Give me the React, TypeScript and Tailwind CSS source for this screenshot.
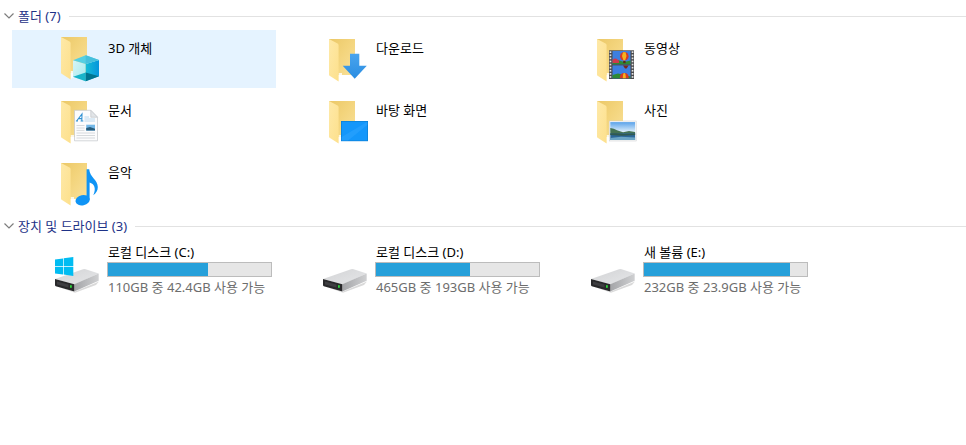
import { useState, type ReactNode } from "react";

const ICON_CLASS = "h-12 w-13 shrink-0";
const ICON_BOX = "-4 0 52 48";

function FolderShape({ raised = false }: { raised?: boolean }) {
  return (
    <g transform={raised ? "translate(0 -2)" : undefined}>
      <path d="M5 4H31V40H5Z" fill="url(#folder-back)" />
      <path d="M14.6 38H18V44L14.6 46Z" fill="#ffffff" opacity="0.8" />
      <path d="M5 4L13.6 8.6Q14.6 9.3 14.6 10.6V46.4L5.6 40.8Q5 40.4 5 39.6Z" fill="url(#folder-front)" />
    </g>
  );
}

function GradientDefs() {
  return (
    <svg className="absolute size-0" aria-hidden="true">
      <defs>
        <linearGradient id="folder-back" x1="0" y1="0" x2="1" y2="1">
          <stop offset="0" stopColor="#ebc867" />
          <stop offset="0.45" stopColor="#f3d47c" />
          <stop offset="1" stopColor="#f9e19a" />
        </linearGradient>
        <linearGradient id="folder-front" x1="0" y1="0" x2="1" y2="1">
          <stop offset="0" stopColor="#fee9a8" />
          <stop offset="1" stopColor="#fde08c" />
        </linearGradient>
        <linearGradient id="cube-left" x1="0" y1="0" x2="1" y2="1">
          <stop offset="0" stopColor="#d6f5f6" />
          <stop offset="1" stopColor="#a4e9ee" />
        </linearGradient>
        <linearGradient id="cube-right" x1="0" y1="0" x2="1" y2="0">
          <stop offset="0" stopColor="#17bdd6" />
          <stop offset="1" stopColor="#0594dc" />
        </linearGradient>
        <linearGradient id="sky" x1="0" y1="0" x2="0" y2="1">
          <stop offset="0" stopColor="#5aa2ea" />
          <stop offset="1" stopColor="#e6f3fb" />
        </linearGradient>
        <linearGradient id="drive-top" x1="0" y1="0" x2="1" y2="1">
          <stop offset="0" stopColor="#d2d3d5" />
          <stop offset="1" stopColor="#e6e7e9" />
        </linearGradient>
        <linearGradient id="drive-side" x1="0" y1="0" x2="1" y2="0">
          <stop offset="0" stopColor="#a4a5a8" />
          <stop offset="1" stopColor="#cfd0d2" />
        </linearGradient>
        <linearGradient id="arrow" x1="0" y1="0" x2="0" y2="1">
          <stop offset="0" stopColor="#49a4ee" />
          <stop offset="1" stopColor="#2a8de2" />
        </linearGradient>
      </defs>
    </svg>
  );
}

function FolderIcon({ children, raised }: { children: ReactNode; raised?: boolean }) {
  return (
    <svg className={ICON_CLASS} viewBox={ICON_BOX} aria-hidden="true">
      <FolderShape raised={raised} />
      {children}
    </svg>
  );
}

function Objects3DIcon() {
  return (
    <FolderIcon raised>
      <path d="M17 25.3L29.7 29V46.2L17 41.7Z" fill="url(#cube-left)" />
      <path d="M29.7 29L43 25V41.3L29.7 46.2Z" fill="url(#cube-right)" />
      <path d="M17 25.3L29.7 20.3L43 25L29.7 29Z" fill="#55cfe2" />
      <path d="M29.7 20.3L43 25L29.7 29Z" fill="#46bfdc" />
      <path d="M17 41.7L29.7 37.6V46.2Z" fill="#19b4c9" />
      <path d="M43 41.3L29.7 37.6V46.2Z" fill="#00748f" />
    </FolderIcon>
  );
}

function DownloadsIcon() {
  return (
    <FolderIcon>
      <path d="M26 18.7H35.3V30.7H42.8L30.7 43.8L18.7 30.7H26Z" fill="url(#arrow)" />
    </FolderIcon>
  );
}

const SPROCKETS = [16.3, 19.4, 22.5, 25.6, 28.7, 31.8, 34.9, 38, 41.1];

function VideosIcon() {
  return (
    <FolderIcon>
      <rect x="17" y="15.3" width="25" height="28.7" fill="#4a4a4c" />
      {SPROCKETS.map((y) => (
        <g key={y} fill="#e3e3e3">
          <rect x="17.6" y={y} width="1.7" height="1.7" />
          <rect x="39.7" y={y} width="1.7" height="1.7" />
        </g>
      ))}
      <rect x="20.5" y="16" width="18" height="13.2" fill="#3d7fe0" />
      <path d="M20.5 26L26 25L32 27L38.5 25.5V29.2H20.5Z" fill="#2e8a35" />
      <path d="M20.5 25Q23 22.5 25.5 24.5Q27.5 25 27 28H20.5Z" fill="#cf3b4c" />
      <circle cx="32.3" cy="21.3" r="4.3" fill="#d63a25" />
      <path d="M31 17.2H33.6L34.5 21L33.2 25.2H31.4L30 21Z" fill="#f5b41d" />
      <rect x="31.2" y="26" width="2.4" height="2.2" fill="#5a2a12" />
      <rect x="20.5" y="30.4" width="18" height="12.9" fill="#3d7fe0" />
      <path d="M20.5 40L26 38.6L38.5 41.5V43.3H20.5Z" fill="#2e8a35" />
      <path d="M31 30.4H36.5L34.6 33.6H33Z" fill="#7a271b" />
      <path d="M27.8 43.3Q27.8 38 32.3 38Q36.8 38 36.8 43.3Z" fill="#d63a25" />
      <path d="M30.8 43.3Q30.8 38 32.3 38Q33.8 38 33.8 43.3Z" fill="#f5b41d" />
    </FolderIcon>
  );
}

function DocumentsIcon() {
  return (
    <FolderIcon>
      <path d="M18.5 13.3H34.8L41.5 20.2V43.8H18.5Z" fill="#fcfcfd" stroke="#c3c6ca" strokeWidth="0.7" />
      <path d="M34.8 13.3V20.2H41.5Z" fill="#e2e5e8" stroke="#c3c6ca" strokeWidth="0.7" />
      <path d="M20.6 24L26 17L25.8 24M22.6 21.6H26M19.9 24H22M24.6 24H27.3" fill="none" stroke="#3493d4" strokeWidth="1.1" />
      <path d="M28.5 20H33M28.5 22H39M28.5 24H39" stroke="#b5d6ec" strokeWidth="0.9" />
      <path d="M20.5 28.5H28.5M20.5 31H28.5M20.5 33.4H28.5M20.5 36H39M20.5 38.5H39M20.5 41H39" stroke="#d3d6d9" strokeWidth="0.9" />
      <rect x="30.2" y="27.7" width="8.8" height="5.9" fill="#74b8e8" />
      <path d="M30.2 31L34 30L39 31.8V33.6H30.2Z" fill="#285d7c" />
    </FolderIcon>
  );
}

function DesktopIcon() {
  return (
    <FolderIcon>
      <rect x="17" y="24" width="27" height="20.2" fill="#0b7fd4" />
      <rect x="17.7" y="24.7" width="25.6" height="18.8" fill="#1497fb" />
      <path d="M43.3 24.7V28L24 43.5H17.7V40Z" fill="#2ba4ff" opacity="0.6" />
    </FolderIcon>
  );
}

function PicturesIcon() {
  return (
    <FolderIcon>
      <rect x="17.2" y="24" width="27" height="20" fill="#f8f8f8" stroke="#c9cccf" strokeWidth="0.5" />
      <rect x="18.3" y="25.1" width="24.8" height="10.4" fill="url(#sky)" />
      <path d="M18.3 31Q22 31.3 25 33.2L31 35.2L37 34L43.1 35V37.5H18.3Z" fill="#447252" />
      <rect x="18.3" y="36.4" width="24.8" height="6.5" fill="#2c6798" />
      <path d="M18.3 36.5Q24 35.6 32 37L43.1 36.5V38L30 38.8L18.3 38Z" fill="#315a50" />
      <path d="M18.3 41L29 39.8L43.1 40.5V42.9H18.3Z" fill="#6ba5c5" />
    </FolderIcon>
  );
}

function MusicIcon() {
  return (
    <FolderIcon>
      <ellipse cx="26.6" cy="41.2" rx="7.2" ry="5.1" transform="rotate(-12 26.6 41.2)" fill="#0f94f5" />
      <path
        d="M30.6 10.2H33.2C33.8 18.5 41.8 20.5 41.8 28C41.8 31.5 40.3 34 37.3 36.2C40.5 29.5 38.3 25 33.6 23.6V41H30.6Z"
        fill="#0f94f5"
      />
    </FolderIcon>
  );
}

function DriveIcon({ system = false }: { system?: boolean }) {
  return (
    <svg className={ICON_CLASS} viewBox={ICON_BOX} aria-hidden="true">
      <path d="M0 41L18.3 46.8L43 36.5L40 40L19 47.8Z" fill="#000000" opacity="0.15" />
      <path d="M-1 34L27 24.2Q28.3 23.8 29.6 24.2L42.7 28.6L18.3 39.4Z" fill="url(#drive-top)" />
      <path d="M18.3 39.2L42.7 28.6V35.8L18.3 46.4Z" fill="url(#drive-side)" />
      <path d="M-1 34L18.3 39.2V46.4L-0.2 41.2Q-1 41 -1 40Z" fill="#29292b" />
      <path d="M1 36.4L12.5 39.6V42.6L1 39.4Z" fill="#3e3e41" />
      <rect x="14" y="40.2" width="1.8" height="2.6" fill="#2fd63c" />
      {system && (
        <g fill="#00bcf2">
          <path d="M-1 14.5L7 13.4V21H-1Z" />
          <path d="M7.7 13.3L17.3 12V21H7.7Z" />
          <path d="M-1 21.7H7V29.5L-1 28.4Z" />
          <path d="M7.7 21.7H17.3V31L7.7 29.6Z" />
        </g>
      )}
    </svg>
  );
}

const folders = [
  { name: "3D 개체", icon: <Objects3DIcon /> },
  { name: "다운로드", icon: <DownloadsIcon /> },
  { name: "동영상", icon: <VideosIcon /> },
  { name: "문서", icon: <DocumentsIcon /> },
  { name: "바탕 화면", icon: <DesktopIcon /> },
  { name: "사진", icon: <PicturesIcon /> },
  { name: "음악", icon: <MusicIcon /> },
];

const drives = [
  { name: "로컬 디스크 (C:)", detail: "110GB 중 42.4GB 사용 가능", used: 61.5, system: true },
  { name: "로컬 디스크 (D:)", detail: "465GB 중 193GB 사용 가능", used: 57.5, system: false },
  { name: "새 볼륨 (E:)", detail: "232GB 중 23.9GB 사용 가능", used: 89.7, system: false },
];

function Section({ title, children }: { title: string; children: ReactNode }) {
  const [open, setOpen] = useState(true);

  return (
    <section className="flex flex-col gap-1">
      <button
        className="flex h-5 w-full items-center pl-1 text-[#1e3287]"
        aria-expanded={open}
        onClick={() => setOpen(!open)}
      >
        <svg className="h-2.5 w-2.5 shrink-0" viewBox="0 0 10 10" aria-hidden="true">
          <path d="M0.5 2.5L5 7L9.5 2.5" fill="none" stroke="#7d7d7d" strokeWidth="1.2" />
        </svg>
        <span className="pr-2 pl-1">{title}</span>
        <span className="h-px flex-1 bg-[#e2e2e2]" />
      </button>
      {open && (
        <div className="grid grid-cols-[repeat(auto-fill,264px)] gap-1 pl-3">{children}</div>
      )}
    </section>
  );
}

interface TileProps {
  icon: ReactNode;
  selected: boolean;
  onSelect: () => void;
  children: ReactNode;
}

function Tile({ icon, selected, onSelect, children }: TileProps) {
  return (
    <button
      className={`flex h-[58px] gap-[3px] pt-[5px] pl-10 text-left ${selected ? "bg-[#e5f3ff]" : "bg-white"}`}
      aria-pressed={selected}
      onClick={onSelect}
    >
      {icon}
      {children}
    </button>
  );
}

export default function App() {
  const [selected, setSelected] = useState("3D 개체");

  return (
    <main className="flex min-h-screen flex-col gap-1 bg-white pt-1.5 font-['Noto_Sans','Noto_Sans_CJK_KR',sans-serif] text-[13px] leading-5 text-black">
      <GradientDefs />
      <Section title="폴더 (7)">
        {folders.map((folder) => (
          <Tile
            key={folder.name}
            icon={folder.icon}
            selected={selected === folder.name}
            onSelect={() => setSelected(folder.name)}
          >
            <span className="pt-[3px] pl-px">{folder.name}</span>
          </Tile>
        ))}
      </Section>
      <Section title="장치 및 드라이브 (3)">
        {drives.map((drive) => (
          <Tile
            key={drive.name}
            icon={<DriveIcon system={drive.system} />}
            selected={selected === drive.name}
            onSelect={() => setSelected(drive.name)}
          >
            <span className="-mt-[3px] flex flex-col">
              <span className="pl-px">{drive.name}</span>
              <progress
                className="block h-[15px] w-[165px] appearance-none border border-[#bcbcbc] bg-[#e6e6e6] [&::-webkit-progress-bar]:bg-[#e6e6e6] [&::-webkit-progress-value]:bg-[#26a0da]"
                value={drive.used}
                max={100}
                aria-label={drive.name}
              />
              <span className="pl-px text-[#6d6d6d]">{drive.detail}</span>
            </span>
          </Tile>
        ))}
      </Section>
    </main>
  );
}
